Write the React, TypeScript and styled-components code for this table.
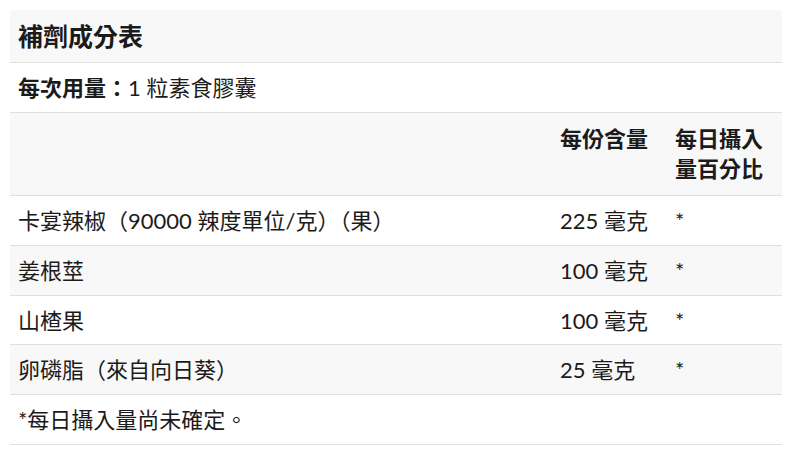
import React from "react";
import styled, { createGlobalStyle } from "styled-components";

const GlobalStyle = createGlobalStyle`
  body {
    margin: 0;
    background: #fff;
    font-family: Lato, "Noto Sans CJK TC", sans-serif;
    color: #1b1b1b;
  }
`;

const Wrapper = styled.div`
  padding: 10px 21px 0 10px;
`;

const Table = styled.table`
  width: 100%;
  border-collapse: collapse;
  table-layout: fixed;
  font-size: 22px;
  line-height: 30px;
`;

const Row = styled.tr<{ $shade?: boolean }>`
  background: ${(p) => (p.$shade ? "#f8f8f8" : "#fff")};
  border-bottom: 1px solid #e0e0e0;
`;

const Cell = styled.td<{ $tight?: boolean }>`
  padding: ${(p) => (p.$tight ? "10px 8px 8px" : "10px 8px 9px")};
  vertical-align: top;
  text-align: left;
  white-space: nowrap;
`;

const HeadCell = styled.th`
  padding: 11px 8px 11px;
  vertical-align: top;
  text-align: left;
  font-weight: 700;
`;

const Title = styled.th`
  padding: 11px 8px 11px;
  text-align: left;
  font-size: 25px;
  font-weight: 700;
`;

const Label = styled.strong`
  font-weight: 700;
`;

const rows = [
  { name: "卡宴辣椒（90000 辣度單位/克）（果）", amount: "225 毫克" },
  { name: "姜根莖", amount: "100 毫克" },
  { name: "山楂果", amount: "100 毫克", tight: true },
  { name: "卵磷脂（來自向日葵）", amount: "25 毫克" },
];

export default function App() {
  return (
    <>
      <GlobalStyle />
      <Wrapper>
        <Table>
          <colgroup>
            <col />
            <col style={{ width: 115 }} />
            <col style={{ width: 115 }} />
          </colgroup>
          <thead>
            <Row $shade>
              <Title colSpan={3}>補劑成分表</Title>
            </Row>
            <Row>
              <Cell colSpan={3}>
                <Label>每次用量：</Label>1 粒素食膠囊
              </Cell>
            </Row>
            <Row $shade>
              <HeadCell></HeadCell>
              <HeadCell>每份含量</HeadCell>
              <HeadCell>每日攝入量百分比</HeadCell>
            </Row>
          </thead>
          <tbody>
            {rows.map((r, i) => (
              <Row key={r.name} $shade={i % 2 === 1}>
                <Cell $tight={r.tight}>{r.name}</Cell>
                <Cell $tight={r.tight}>{r.amount}</Cell>
                <Cell $tight={r.tight}>*</Cell>
              </Row>
            ))}
            <Row>
              <Cell colSpan={3}>*每日攝入量尚未確定。</Cell>
            </Row>
          </tbody>
        </Table>
      </Wrapper>
    </>
  );
}
